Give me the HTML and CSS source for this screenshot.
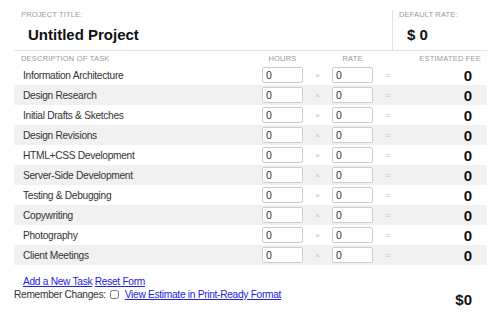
FILE: index.html
```html
<!DOCTYPE html>
<html lang="en">
<head>
    <meta charset="UTF-8">
    <title>Project Estimate</title>
    <link rel="stylesheet" href="styles.css">
</head>
<body>
    <div class="estimate">
        <div class="project-head">
            <div class="project-title">
                <div class="label">Project Title:</div>
                <div class="title">Untitled Project</div>
            </div>
            <div class="default-rate">
                <div class="label">Default Rate:</div>
                <div class="title">$ 0</div>
            </div>
        </div>

        <div class="tasks">
            <div class="row head">
                <div class="desc">Description of Task</div>
                <div class="center">Hours</div>
                <div></div>
                <div class="center">Rate</div>
                <div></div>
                <div class="fee">Estimated Fee</div>
            </div>
            <div class="row"><div class="desc">Information Architecture</div><input value="0"><span class="op">×</span><input value="0"><span class="op">=</span><div class="fee">0</div></div>
            <div class="row alt"><div class="desc">Design Research</div><input value="0"><span class="op">×</span><input value="0"><span class="op">=</span><div class="fee">0</div></div>
            <div class="row"><div class="desc">Initial Drafts &amp; Sketches</div><input value="0"><span class="op">×</span><input value="0"><span class="op">=</span><div class="fee">0</div></div>
            <div class="row alt"><div class="desc">Design Revisions</div><input value="0"><span class="op">×</span><input value="0"><span class="op">=</span><div class="fee">0</div></div>
            <div class="row"><div class="desc">HTML+CSS Development</div><input value="0"><span class="op">×</span><input value="0"><span class="op">=</span><div class="fee">0</div></div>
            <div class="row alt"><div class="desc">Server-Side Development</div><input value="0"><span class="op">×</span><input value="0"><span class="op">=</span><div class="fee">0</div></div>
            <div class="row"><div class="desc">Testing &amp; Debugging</div><input value="0"><span class="op">×</span><input value="0"><span class="op">=</span><div class="fee">0</div></div>
            <div class="row alt"><div class="desc">Copywriting</div><input value="0"><span class="op">×</span><input value="0"><span class="op">=</span><div class="fee">0</div></div>
            <div class="row"><div class="desc">Photography</div><input value="0"><span class="op">×</span><input value="0"><span class="op">=</span><div class="fee">0</div></div>
            <div class="row alt"><div class="desc">Client Meetings</div><input value="0"><span class="op">×</span><input value="0"><span class="op">=</span><div class="fee">0</div></div>
        </div>

        <div class="actions">
            <a href="#">Add a New Task</a> <a href="#">Reset Form</a>
        </div>
        <div class="footer">
            <div class="remember">
                Remember Changes: <input type="checkbox" class="check">
                <a href="#">View Estimate in Print-Ready Format</a>
            </div>
            <div class="total">$0</div>
        </div>
    </div>
</body>
</html>
```

FILE: styles.css
```css
body {
    margin: 0;
    font-family: "Liberation Sans", Arial, sans-serif;
    color: #333;
    background: #fff;
}

.estimate {
    margin-left: 14px;
    width: 473px;
}

.project-head {
    display: flex;
    height: 51px;
    border-bottom: 1px solid #e2e2e2;
    box-sizing: border-box;
}

.project-title {
    width: 378px;
    padding: 11px 0 0 7px;
    box-sizing: border-box;
}

.default-rate {
    flex: 1;
    margin-top: 10px;
    border-left: 1px solid #e2e2e2;
    padding: 1px 0 0 6px;
}

.label {
    font-size: 7.5px;
    text-transform: uppercase;
    color: #999;
    letter-spacing: 0.15px;
    line-height: 8px;
}

.title {
    font-size: 15px;
    font-weight: bold;
    color: #111;
    margin-top: 7px;
    padding-left: 7px;
}

.default-rate .title {
    padding-left: 8px;
}

.row {
    display: grid;
    grid-template-columns: 248px 41px 29px 41px 30px 1fr;
    align-items: center;
    height: 20px;
}

.row.head {
    height: 14px;
    font-size: 7.5px;
    text-transform: uppercase;
    color: #999;
    letter-spacing: 0.2px;
}

.row.head .desc {
    padding-left: 7px;
    font-size: 7.5px;
    letter-spacing: 0.2px;
    color: #999;
}

.row.head .fee {
    font-size: 7.5px;
    font-weight: normal;
    color: #999;
    padding-right: 6px;
}

.row.alt {
    background: #f1f1f1;
}

.desc {
    padding-left: 9px;
    font-size: 10.2px;
    letter-spacing: -0.3px;
    color: #333;
}

.center {
    text-align: center;
}

.row input {
    width: 41px;
    height: 16px;
    box-sizing: border-box;
    border: 1px solid #ccc;
    border-radius: 2px;
    padding: 0 3px;
    margin: 0;
    font-family: "Liberation Sans", Arial, sans-serif;
    font-size: 10.5px;
    color: #333;
    background: #fff;
}

.op {
    font-size: 8px;
    color: #bbb;
    text-align: center;
}

.fee {
    text-align: right;
    padding-right: 15px;
    font-size: 15px;
    font-weight: bold;
    color: #111;
}

a {
    color: #2222dd;
}

.actions {
    margin-top: 11px;
    padding-left: 9px;
    font-size: 10.2px;
    letter-spacing: -0.3px;
}

.footer {
    display: flex;
    justify-content: space-between;
    align-items: flex-start;
    font-size: 10.2px;
    letter-spacing: -0.3px;
}

.remember {
    padding-top: 2px;
}

.check {
    width: 9px;
    height: 9px;
    margin: 0 3px 0 2px;
    vertical-align: -1px;
}

.total {
    font-size: 15px;
    font-weight: bold;
    color: #111;
    letter-spacing: 0;
    padding: 4px 15px 0 0;
}
```
